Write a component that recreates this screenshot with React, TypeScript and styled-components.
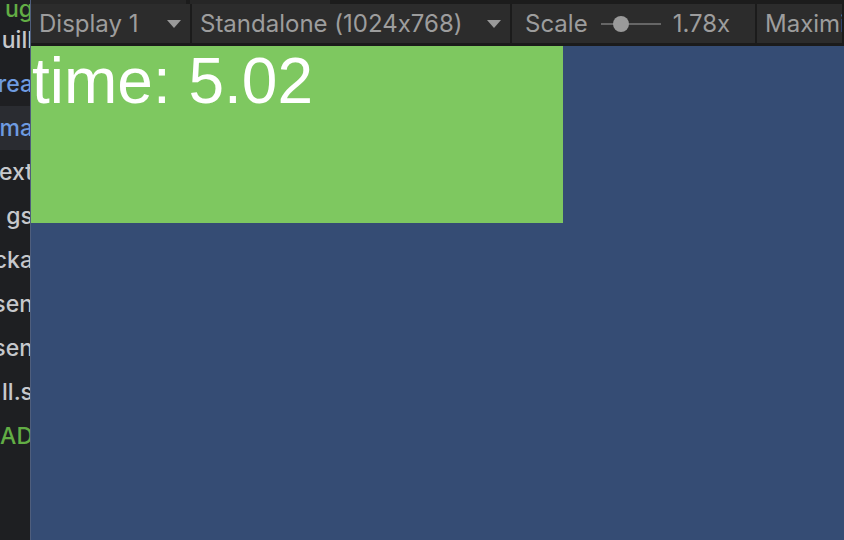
import React from "react";
import styled, { createGlobalStyle } from "styled-components";

const Global = createGlobalStyle`
  html, body { margin: 0; padding: 0; width: 844px; height: 540px; overflow: hidden; background: #1e1f22; }
  #root { width: 844px; height: 540px; }
`;

const Frame = styled.div`
  display: flex;
  width: 844px;
  height: 540px;
  overflow: hidden;
`;

const Sidebar = styled.div`
  width: 30px;
  flex: 0 0 30px;
  background: #1e1f22;
  border-right: 1px solid #4f5e7c;
  overflow: hidden;
  display: flex;
  flex-direction: column;
  font-family: Inter, "Noto Sans", sans-serif;
  font-size: 23px;
  font-weight: 500;
  font-feature-settings: "calt" 0;
`;

const SideRow = styled.div<{ $tone: "grey" | "blue" | "green"; $active?: boolean; $h?: number }>`
  height: ${(p) => p.$h ?? 44}px;
  flex: 0 0 auto;
  display: flex;
  align-items: center;
  justify-content: flex-end;
  white-space: nowrap;
  background: ${(p) => (p.$active ? "#2a2c31" : "transparent")};
  color: ${(p) =>
    p.$tone === "blue" ? "#6e9be0" : p.$tone === "green" ? "#62ad45" : "#c6c8cc"};
  span { margin-right: -3px; }
`;

const Main = styled.div`
  flex: 1;
  display: flex;
  flex-direction: column;
  background: #354c74;
  min-width: 0;
`;

const TabStrip = styled.div`
  height: 4px;
  background: #1c1c1c;
  display: flex;
`;

const TabPiece = styled.div<{ $w: number }>`
  width: ${(p) => p.$w}px;
  background: #262626;
  margin-right: 4px;
`;

const Toolbar = styled.div`
  height: 39px;
  background: #2c2c2c;
  border-bottom: 3px solid #1b1b1b;
  display: flex;
  align-items: stretch;
  font-family: Inter, "Noto Sans", sans-serif;
  font-size: 24px;
  font-feature-settings: "calt" 0;
  color: #9d9d9d;
  white-space: nowrap;
`;

const Segment = styled.div<{ $w?: number }>`
  ${(p) => (p.$w ? `width: ${p.$w}px; flex: 0 0 ${p.$w}px;` : "flex: 1;")}
  box-sizing: border-box;
  display: flex;
  align-items: center;
  padding-left: 8px;
  padding-right: 9px;
  border-right: 2px solid #1b1b1b;
  overflow: hidden;
`;

const Label = styled.span`
  flex: 1;
`;

const Caret = styled.svg`
  width: 14px;
  height: 8px;
  flex: 0 0 14px;
`;

const ScaleSeg = styled(Segment)`
  padding-left: 13px;
`;

const Slider = styled.div`
  width: 60px;
  height: 16px;
  margin: 0 12px 0 13px;
  display: flex;
  align-items: center;
  position: relative;
`;

const Track = styled.div`
  flex: 1;
  height: 2px;
  background: #666;
`;

const Knob = styled.div`
  position: absolute;
  left: 12px;
  top: 0;
  width: 16px;
  height: 16px;
  border-radius: 50%;
  background: #9a9a9a;
`;

const Stage = styled.div`
  flex: 1;
  background: #354c74;
`;

const GamePanel = styled.div`
  width: 532px;
  height: 177px;
  background: #7ec860;
  font-family: "Liberation Sans", Arial, sans-serif;
  font-size: 64px;
  color: #ffffff;
  padding-left: 1px;
  box-sizing: border-box;
  line-height: 1.12;
`;

const CaretIcon = () => (
  <Caret viewBox="0 0 14 8">
    <polygon points="0,0 14,0 7,8" fill="#9a9a9a" />
  </Caret>
);

const rows: { t: string; tone: "grey" | "blue" | "green"; active?: boolean; h?: number }[] = [
  { t: "ug", tone: "green", h: 18 },
  { t: "uill", tone: "grey" },
  { t: "trea", tone: "blue" },
  { t: "ma", tone: "blue", active: true },
  { t: "ext", tone: "grey" },
  { t: "gs", tone: "grey" },
  { t: "cka", tone: "grey" },
  { t: "sen", tone: "grey" },
  { t: "sen", tone: "grey" },
  { t: "ll.s", tone: "grey" },
  { t: "AD", tone: "green" },
];

export default function App() {
  return (
    <>
      <Global />
      <Frame>
        <Sidebar>
          {rows.map((r, i) => (
            <SideRow key={i} $tone={r.tone} $active={r.active} $h={r.h}>
              <span>{r.t}</span>
            </SideRow>
          ))}
        </Sidebar>
        <Main>
          <TabStrip>
            <TabPiece $w={155} />
            <TabPiece $w={140} />
          </TabStrip>
          <Toolbar>
            <Segment $w={161}>
              <Label>Display 1</Label>
              <CaretIcon />
            </Segment>
            <Segment $w={320}>
              <Label>Standalone (1024x768)</Label>
              <CaretIcon />
            </Segment>
            <ScaleSeg $w={245}>
              <span>Scale</span>
              <Slider>
                <Track />
                <Knob />
              </Slider>
              <span>1.78x</span>
            </ScaleSeg>
            <Segment>
              <Label>Maximize On Play</Label>
            </Segment>
          </Toolbar>
          <Stage>
            <GamePanel>time: 5.02</GamePanel>
          </Stage>
        </Main>
      </Frame>
    </>
  );
}
